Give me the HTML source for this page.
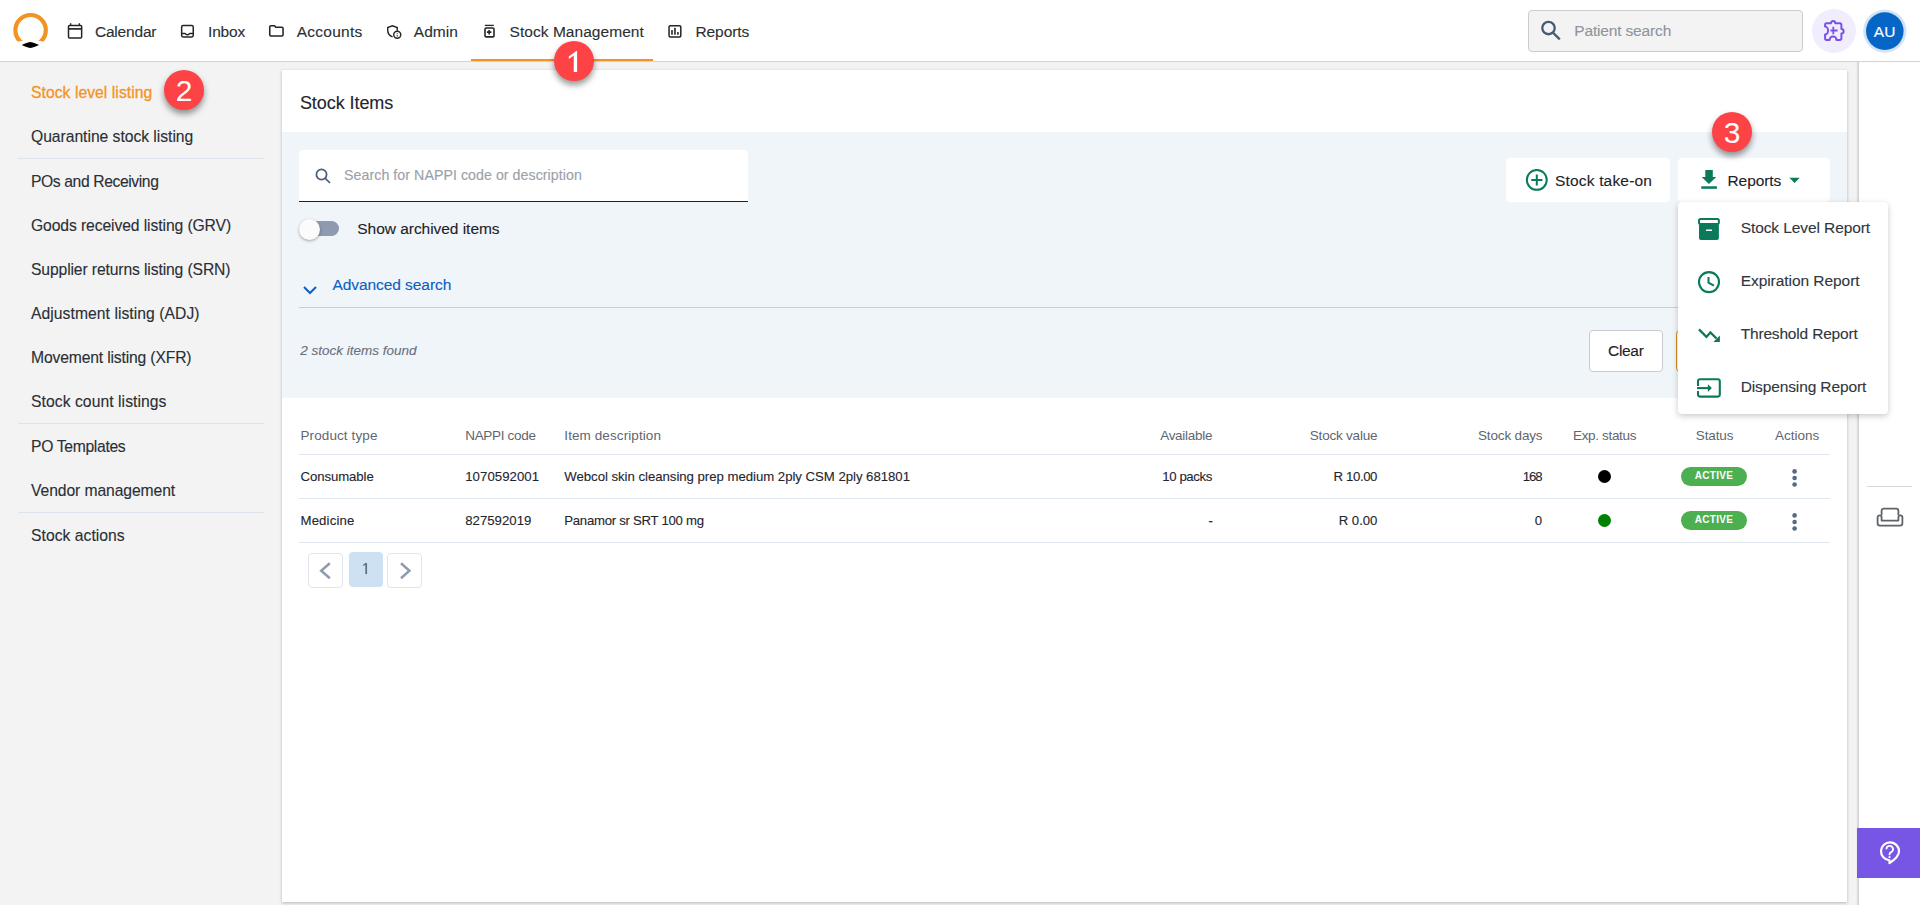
<!DOCTYPE html>
<html><head><meta charset="utf-8">
<style>
*{box-sizing:border-box;margin:0;padding:0}
html,body{width:1920px;height:905px;overflow:hidden;background:#f3f3f3;font-family:"Liberation Sans",sans-serif;color:#1d2530}
.t,.si,.td,.mi{-webkit-text-stroke:0.12px currentColor}
.abs{position:absolute}
#hdr{position:absolute;left:0;top:0;width:1920px;height:62px;background:#fff;border-bottom:1px solid #cfd3d8}
.nav{position:absolute;top:0;height:61px;font-size:15.5px;color:#2b2f33;line-height:61px;white-space:nowrap}
.nav svg{position:absolute}
.t{position:absolute;white-space:nowrap}
#side{position:absolute;left:0;top:62px;width:282px;height:843px;background:#f3f3f3}
.si{position:absolute;left:31px;font-size:15.7px;margin-top:2px;color:#2a2f36;white-space:nowrap;line-height:20px}
.sd{position:absolute;left:18px;width:246px;height:1px;background:#dde3ea}
#card{position:absolute;left:282px;top:70px;width:1565px;height:832px;background:#fff;box-shadow:0 1px 3px rgba(0,0,0,.25)}
#filt{position:absolute;left:0;top:62px;width:1565px;height:266px;background:#f0f5fa}
.badge{position:absolute;width:40px;height:40px;border-radius:50%;background:#fd4346;color:#fff;font-size:30px;text-align:center;line-height:42px;box-shadow:0 4px 6px rgba(0,0,0,.42)}
.th{position:absolute;top:428px;font-size:13.5px;color:#5f6670;white-space:nowrap;line-height:16px}
.td{position:absolute;font-size:13.2px;margin-top:1px;color:#1f2630;white-space:nowrap;line-height:16px}
.hl{position:absolute;left:299px;width:1531px;height:1px;background:#dfe6ee}
.pill{position:absolute;width:66px;height:19px;border-radius:9.5px;background:#4caf50;color:#fff;font-size:10px;font-weight:bold;text-align:center;line-height:18px;letter-spacing:.3px}
.mi{position:absolute;left:1740px;font-size:15.5px;color:#2f3640;white-space:nowrap;line-height:20px}
</style></head><body>
<div id="hdr"></div>
<!-- logo -->
<svg class="abs" style="left:8px;top:8px" width="46" height="44" viewBox="0 0 46 44">
  <defs><clipPath id="lc"><polygon points="0,0 46,0 46,35.5 22.6,31.2 0,35.5"/></clipPath></defs>
  <circle cx="22.6" cy="22.2" r="15.2" fill="none" stroke="#f39322" stroke-width="4.2" clip-path="url(#lc)"/>
  <path d="M13.6 36.95Q17.5 35 20 34.4Q22.35 33.6 24.7 34.4Q27.2 35 31.1 36.95Q27.2 38.9 24.7 39.5Q22.35 40.3 20 39.5Q17.5 38.9 13.6 36.95Z" fill="#000"/>
</svg>
<!-- nav icons + labels -->
<svg class="abs" style="left:60px;top:18px" width="30" height="26" viewBox="0 0 30 26" fill="none" stroke="#222529" stroke-width="1.5"><rect x="8.5" y="7.5" width="13.15" height="12.55" rx="1"/><path d="M8.5 10.9h13.15" stroke-width="1.7"/><path d="M10.6 5.3v2.2M19.4 5.3v2.2" stroke-width="1.4"/></svg>
<svg class="abs" style="left:175px;top:18px" width="30" height="26" viewBox="0 0 30 26" fill="none" stroke="#222529" stroke-width="1.5"><rect x="6.65" y="7.5" width="11.6" height="11.45" rx="1.4"/><path d="M6.65 15.5H10c.6 0 .8 1.3 2.4 1.3s1.8-1.3 2.4-1.3h3.45"/></svg>
<svg class="abs" style="left:263px;top:18px" width="30" height="26" viewBox="0 0 30 26" fill="none" stroke="#222529" stroke-width="1.55"><path d="M6.75 9a1.2 1.2 0 0 1 1.2-1.2H11.5l1.3 1.5h6.05a1.2 1.2 0 0 1 1.2 1.2v6.35a1.2 1.2 0 0 1-1.2 1.2H7.95a1.2 1.2 0 0 1-1.2-1.2z"/></svg>
<svg class="abs" style="left:380px;top:18px" width="30" height="26" viewBox="0 0 30 26" fill="none" stroke="#222529" stroke-width="1.45"><path d="M12.6 18.9C9.2 17.6 7.75 15 7.75 12.2V9.5l4.65-1.7 4.8 1.7v3.3"/><circle cx="17.24" cy="16.8" r="3.5"/><rect x="16.7" y="15.1" width="1.1" height=".7" fill="#222529" stroke="none"/><rect x="16.7" y="16.9" width="1.1" height="1.6" fill="#222529" stroke="none"/></svg>
<svg class="abs" style="left:475px;top:18px" width="30" height="26" viewBox="0 0 30 26" fill="none" stroke="#222529" stroke-width="1.6"><path d="M9.9 7.4h8.9" stroke-width="1.3"/><rect x="10" y="10" width="9" height="8.9" rx="1.2"/><path d="M14.1 11.9v4.5M11.9 14.1h4.5"/></svg>
<svg class="abs" style="left:660px;top:18px" width="30" height="26" viewBox="0 0 30 26" fill="none" stroke="#222529" stroke-width="1.5"><rect x="9.05" y="7.65" width="11.75" height="11.3" rx="1.2"/><g fill="#222529" stroke="none"><rect x="11.2" y="12.1" width="1.6" height="4.6" rx=".5"/><rect x="14.15" y="9.8" width="1.6" height="6.9" rx=".5"/><rect x="17.15" y="14.1" width="1.6" height="2.6" rx=".5"/></g></svg>
<div class="t" style="left:94.90px;top:23px;font-size:15.5px;color:#2b2f33;letter-spacing:-0.184px">Calendar</div>
<div class="t" style="left:208.00px;top:23px;font-size:15.5px;color:#2b2f33;letter-spacing:-0.159px">Inbox</div>
<div class="t" style="left:296.70px;top:23px;font-size:15.5px;color:#2b2f33;letter-spacing:0.251px">Accounts</div>
<div class="t" style="left:413.80px;top:23px;font-size:15.5px;color:#2b2f33;letter-spacing:0.014px">Admin</div>
<div class="t" style="left:509.50px;top:23px;font-size:15.5px;color:#2b2f33;letter-spacing:0.051px">Stock Management</div>
<div class="abs" style="left:471px;top:59px;width:182px;height:2px;background:#f39322"></div>
<div class="t" style="left:695.50px;top:23px;font-size:15.5px;color:#2b2f33;letter-spacing:-0.098px">Reports</div>

<!-- patient search -->
<div class="abs" style="left:1528px;top:10px;width:275px;height:42px;background:#f3f3f3;border:1px solid #c9ccd1;border-radius:4px"></div>
<svg class="abs" style="left:1530px;top:10px" width="40" height="40" viewBox="0 0 40 40" fill="none" stroke="#465a73" stroke-width="2.3"><circle cx="18.5" cy="18.05" r="6.2"/><path d="M23.2 22.9l6.6 6.4"/></svg>
<div class="t" style="left:1574.25px;top:22px;font-size:15.5px;color:#8e959e;letter-spacing:-0.160px">Patient search</div>
<div class="abs" style="left:1812px;top:9px;width:44px;height:44px;border-radius:50%;background:#f0edfd"></div>
<svg class="abs" style="left:1810px;top:8px" width="48" height="48" viewBox="0 0 48 48" fill="none" stroke="#7a52e8" stroke-width="2" stroke-linejoin="round"><path d="M16.5 15.3H20.9a2.2 2.2 0 0 1 4.4 0H30a1.4 1.4 0 0 1 1.4 1.4V21.1a2.2 2.2 0 0 1 0 4.4V30.5a1.4 1.4 0 0 1-1.4 1.4H26.5a3.45 3.45 0 0 0-6.9 0H16.46a1.4 1.4 0 0 1-1.4-1.4V26.5a3 3.95 0 0 0 0-7.9V16.7a1.4 1.4 0 0 1 1.4-1.4z"/><path d="M23.3 18.8v7.5M20.4 22.5h7.2" stroke-width="1.8"/></svg>
<svg class="abs" style="left:1860px;top:6px" width="50" height="50" viewBox="0 0 50 50"><circle cx="24.8" cy="25.1" r="21.6" fill="#d3e3f3"/><circle cx="24.8" cy="25.1" r="18.8" fill="#0666c8"/></svg><div class="abs" style="left:1864.8px;top:22px;width:40px;text-align:center;color:#fff;font-size:15.5px;line-height:20px;letter-spacing:.2px;-webkit-text-stroke:.15px #fff">AU</div>

<!-- sidebar -->
<div id="side"></div>
<div class="si" style="top:81px;color:#f5931e;-webkit-text-stroke:0.3px #f5931e;letter-spacing:0.050px">Stock level listing</div>
<div class="si" style="top:125px;letter-spacing:-0.035px">Quarantine stock listing</div>
<div class="sd" style="top:158px"></div>
<div class="si" style="top:170px;letter-spacing:-0.400px">POs and Receiving</div>
<div class="si" style="top:214px;letter-spacing:-0.100px">Goods received listing (GRV)</div>
<div class="si" style="top:258px;letter-spacing:-0.125px">Supplier returns listing (SRN)</div>
<div class="si" style="top:302px;letter-spacing:0.050px">Adjustment listing (ADJ)</div>
<div class="si" style="top:346px;letter-spacing:-0.160px">Movement listing (XFR)</div>
<div class="si" style="top:390px;letter-spacing:0.060px">Stock count listings</div>
<div class="sd" style="top:423px"></div>
<div class="si" style="top:435px;letter-spacing:-0.320px">PO Templates</div>
<div class="si" style="top:479px;letter-spacing:-0.090px">Vendor management</div>
<div class="sd" style="top:512px"></div>
<div class="si" style="top:524px;letter-spacing:0.030px">Stock actions</div>

<!-- right strip -->
<div class="abs" style="left:1855.5px;top:62px;width:3.5px;height:843px;background:linear-gradient(to right,rgba(200,203,208,0),#dcdee1 55%,#c8cbd0)"></div>
<div class="abs" style="left:1859px;top:62px;width:61px;height:843px;background:#fff"></div>
<div class="abs" style="left:1867px;top:486px;width:45px;height:1px;background:#d8d8d8"></div>
<svg class="abs" style="left:1876px;top:506px" width="28" height="22" viewBox="0 0 28 22" fill="none" stroke="#5f646b" stroke-width="1.8" stroke-linejoin="round"><path d="M5.6 9.3V4.8a2.2 2.2 0 0 1 2.2-2.2h12.4a2.2 2.2 0 0 1 2.2 2.2v4.5"/><path d="M5.6 14.6V11.3a2 2 0 0 0-4 0v6a2.3 2.3 0 0 0 2.3 2.3h20.2a2.3 2.3 0 0 0 2.3-2.3v-6a2 2 0 0 0-4 0v3.3z"/></svg>
<div class="abs" style="left:1857px;top:828px;width:63px;height:50px;background:#7756e6"></div>
<svg class="abs" style="left:1840px;top:815px" width="80" height="90" viewBox="0 0 80 90" fill="none" stroke="#fff" stroke-width="2.2" stroke-linejoin="round"><path d="M49.5 48.2C52 46.5 59 41.5 59 36.5A9 9 0 1 0 49.5 45.3z"/><path d="M46.4 34.2a3.3 3.3 0 1 1 4.8 2.9c-1 .5-1.7 1.3-1.7 2.5v.6" stroke-width="1.8"/><circle cx="49.5" cy="42.2" r="1.1" fill="#fff" stroke="none"/></svg>

<!-- card -->
<div id="card">
  <div class="t" style="left:17.90px;top:22.5px;font-size:18px;color:#1d2530;letter-spacing:-0.065px">Stock Items</div>
  <div id="filt"></div>
</div>
<!-- search input -->
<div class="abs" style="left:299px;top:150px;width:449px;height:52px;background:#fff;border-radius:4px 4px 0 0;border-bottom:1px solid #1f2328"></div>
<svg class="abs" style="left:314px;top:167px" width="18" height="18" viewBox="0 0 18 18" fill="none" stroke="#4b5f7a" stroke-width="1.75"><circle cx="7.5" cy="7.5" r="5.1"/><path d="M11.3 11.3l4.7 4.7"/></svg>
<div class="t" style="left:344.10px;top:167px;font-size:14.2px;color:#9aa1a9;letter-spacing:0.054px">Search for NAPPI code or description</div>
<!-- toggle -->
<div class="abs" style="left:302px;top:221px;width:37px;height:15px;border-radius:8px;background:#8d9ab0"></div>
<div class="abs" style="left:299px;top:219px;width:21px;height:21px;border-radius:50%;background:#fbfbfb;box-shadow:0 1px 3px rgba(0,0,0,.35)"></div>
<div class="t" style="left:357.30px;top:220px;font-size:15.5px;color:#1d2228;letter-spacing:-0.040px">Show archived items</div>
<!-- advanced search -->
<svg class="abs" style="left:302px;top:285px" width="16" height="11" viewBox="0 0 16 11" fill="none" stroke="#0a62c6" stroke-width="2.1"><path d="M2 2l6 6 6-6"/></svg>
<div class="t" style="left:332.50px;top:276px;font-size:15.5px;color:#0a5fc2;letter-spacing:-0.070px">Advanced search</div>
<div class="abs" style="left:299px;top:307px;width:1548px;height:1px;background:#c9cdd2"></div>
<div class="t" style="left:300.30px;top:343px;font-size:13.5px;color:#687080;font-style:italic;letter-spacing:-0.000px">2 stock items found</div>
<!-- clear / search buttons -->
<div class="abs" style="left:1589px;top:330px;width:74px;height:42px;background:#fff;border:1px solid #c6cbd1;border-radius:4px"></div>
<div class="t" style="left:1608.00px;top:342px;font-size:15.5px;color:#1d2228;letter-spacing:-0.311px">Clear</div>
<div class="abs" style="left:1676px;top:330px;width:60px;height:42px;background:#fff;border:1px solid #e08a1e;border-radius:4px"></div>
<!-- stock take-on / reports -->
<div class="abs" style="left:1506px;top:158px;width:164px;height:44px;background:#fff;border-radius:4px"></div>
<svg class="abs" style="left:1515px;top:160px" width="45" height="40" viewBox="0 0 45 40" fill="none" stroke="#0b7a5a" stroke-width="2"><circle cx="21.8" cy="19.9" r="9.95"/><path d="M21.8 14.5v10.9M16.2 19.9h11.2"/></svg>
<div class="t" style="left:1555.00px;top:172px;font-size:15.5px;color:#1d2228;letter-spacing:0.176px">Stock take-on</div>
<div class="abs" style="left:1678px;top:158px;width:152px;height:44px;background:#fff;border-radius:4px"></div>
<svg class="abs" style="left:1690px;top:160px" width="40" height="40" viewBox="0 0 40 40" fill="#0b7a5a"><path d="M15.3 10h7.5v6.9h3.45L18.9 24.1l-7.2-7.2h3.6z"/><rect x="11.25" y="26.3" width="15.65" height="2.5"/></svg>
<div class="t" style="left:1727.50px;top:172px;font-size:15.5px;color:#1d2228;letter-spacing:-0.090px">Reports</div>
<svg class="abs" style="left:1789px;top:177px" width="11" height="7" viewBox="0 0 11 7" fill="#0b7a5a"><path d="M0.4 .8h10.3L5.55 6.1z"/></svg>

<!-- table -->
<div class="th" style="left:300.50px;;letter-spacing:0.100px">Product type</div>
<div class="th" style="left:465.20px;;letter-spacing:-0.305px">NAPPI code</div>
<div class="th" style="left:564.30px;;letter-spacing:0.093px">Item description</div>
<div class="th" style="left:1160.20px;;letter-spacing:-0.292px">Available</div>
<div class="th" style="left:1309.80px;;letter-spacing:-0.209px">Stock value</div>
<div class="th" style="left:1478.00px;;letter-spacing:-0.157px">Stock days</div>
<div class="th" style="left:1573.00px;;letter-spacing:-0.339px">Exp. status</div>
<div class="th" style="left:1695.80px;;letter-spacing:-0.134px">Status</div>
<div class="th" style="left:1775.00px;;letter-spacing:0.003px">Actions</div>
<div class="hl" style="top:454px"></div>
<div class="td" style="left:300.50px;top:468px;letter-spacing:-0.091px">Consumable</div>
<div class="td" style="left:465.20px;top:468px;letter-spacing:0.064px">1070592001</div>
<div class="td" style="left:564.30px;top:468px;letter-spacing:-0.029px">Webcol skin cleansing prep medium 2ply CSM 2ply 681801</div>
<div class="td" style="left:1162.20px;top:468px;letter-spacing:-0.376px">10 packs</div>
<div class="td" style="left:1333.60px;top:468px;letter-spacing:-0.389px">R 10.00</div>
<div class="td" style="left:1522.80px;top:468px;letter-spacing:-1.106px">168</div>
<div class="abs" style="left:1598px;top:470px;width:13px;height:13px;border-radius:50%;background:#000"></div>
<div class="pill" style="left:1681px;top:467px">ACTIVE</div>
<svg class="abs" style="left:1790px;top:467px" width="9" height="22" viewBox="0 0 9 22" fill="#566a85"><circle cx="4.6" cy="4.4" r="2.3"/><circle cx="4.6" cy="11" r="2.3"/><circle cx="4.6" cy="17.55" r="2.3"/></svg>
<div class="hl" style="top:498px"></div>
<div class="td" style="left:300.50px;top:512px;letter-spacing:0.152px">Medicine</div>
<div class="td" style="left:465.20px;top:512px;letter-spacing:0.017px">827592019</div>
<div class="td" style="left:564.30px;top:512px;letter-spacing:-0.281px">Panamor sr SRT 100 mg</div>
<div class="td" style="left:1208.50px;top:512px;letter-spacing:0.000px">-</div>
<div class="td" style="left:1338.70px;top:512px;letter-spacing:-0.021px">R 0.00</div>
<div class="td" style="left:1534.70px;top:512px;letter-spacing:0.000px">0</div>
<div class="abs" style="left:1598px;top:514px;width:13px;height:13px;border-radius:50%;background:#008000"></div>
<div class="pill" style="left:1681px;top:511px">ACTIVE</div>
<svg class="abs" style="left:1790px;top:511px" width="9" height="22" viewBox="0 0 9 22" fill="#566a85"><circle cx="4.6" cy="4.4" r="2.3"/><circle cx="4.6" cy="11" r="2.3"/><circle cx="4.6" cy="17.55" r="2.3"/></svg>
<div class="hl" style="top:542px"></div>
<!-- pagination -->
<div class="abs" style="left:308px;top:553px;width:35px;height:35px;border:1px solid #dfe6f0;border-radius:4px;background:#fff"></div>
<div class="abs" style="left:348.5px;top:552px;width:34.5px;height:34.5px;border-radius:4px;background:#cde1f3"></div>
<div class="abs" style="left:387px;top:553px;width:35px;height:35px;border:1px solid #dfe6f0;border-radius:4px;background:#fff"></div>
<svg class="abs" style="left:300px;top:545px" width="130" height="50" viewBox="0 0 130 50" fill="none" stroke="#8e9cb1" stroke-width="2.5"><path d="M29.8 18.3L21.2 25.7L29.8 33.2M101 18.3L109.4 25.7L101 33.2"/><path d="M66.2 18.2V29.1" stroke="#5d6b7f" stroke-width="1.7"/><path d="M66.2 18.3L63.2 20.6" stroke="#5d6b7f" stroke-width="1.2"/></svg>
<!-- dropdown -->
<div class="abs" style="left:1678px;top:202px;width:210px;height:212px;background:#fff;border-radius:4px;box-shadow:0 2px 6px rgba(0,0,0,.22)"></div>
<svg class="abs" style="left:1690px;top:210px" width="40" height="200" viewBox="0 0 40 200" fill="none" stroke="#0b7a5a">
<rect x="9" y="9" width="19.85" height="4.9" rx="1.5" stroke-width="2"/>
<path d="M9 14.4H28.9V27.9a2 2 0 0 1-2 2H11a2 2 0 0 1-2-2z" fill="#0b7a5a" stroke="none"/>
<rect x="16" y="19.4" width="6" height="1.6" rx=".5" fill="#fff" stroke="none"/>
<circle cx="19" cy="72.1" r="10" stroke-width="2.1"/>
<path d="M18.5 67V72.6L23.9 75.7" stroke-width="2"/>
<path d="M9 119.4L16.4 126.9L20.4 122.4L26.5 128.5" stroke-width="2.3"/>
<path d="M29.85 125.4V131.9H23.4z" fill="#0b7a5a" stroke="none"/>
<path d="M8 176.1V171.2a2 2 0 0 1 2-2H27.8a2 2 0 0 1 2 2V184.6a2 2 0 0 1-2 2H10a2 2 0 0 1-2-2V181.1" stroke-width="2.1"/>
<path d="M7 178.1H19" stroke-width="2.1"/>
<path d="M17.9 174.2L21.9 178.1L17.9 182.1z" fill="#0b7a5a" stroke="none"/>
</svg>
<div class="mi" style="left:1740.70px;top:218px;letter-spacing:-0.087px">Stock Level Report</div>
<div class="mi" style="left:1740.70px;top:271px;letter-spacing:-0.055px">Expiration Report</div>
<div class="mi" style="left:1740.70px;top:324px;letter-spacing:-0.178px">Threshold Report</div>
<div class="mi" style="left:1740.70px;top:377px;letter-spacing:-0.120px">Dispensing Report</div>

<!-- badges -->
<div class="badge" style="left:554px;top:41px"><svg width="40" height="40" viewBox="0 0 40 40" style="position:absolute;left:0;top:0"><polygon points="22.6,10 23.1,10 23.1,31 19.75,31 19.75,14.6 14.8,18 14.8,15.6 22.2,10" fill="#fff"/></svg></div>
<div class="badge" style="left:164px;top:69.5px">2</div>
<div class="badge" style="left:1712px;top:112px">3</div>

</body></html>
